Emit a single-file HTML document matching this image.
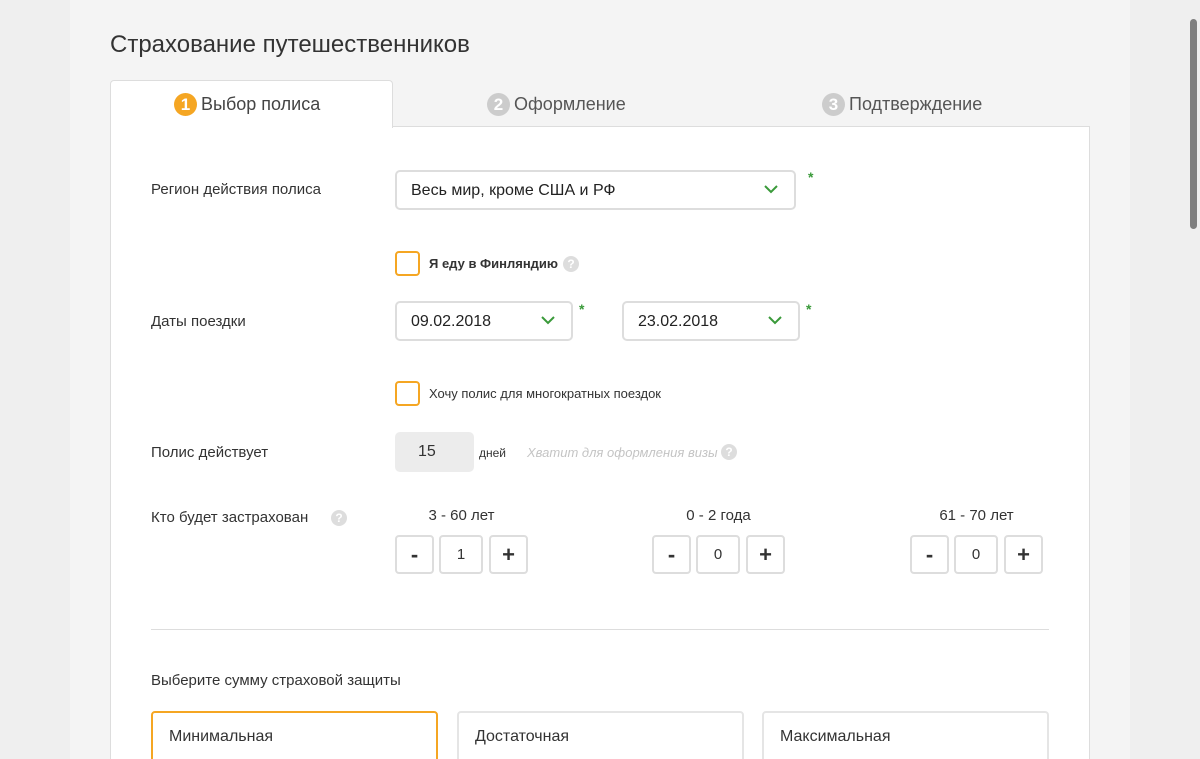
<!DOCTYPE html><html><head><meta charset="utf-8"><style>
*{box-sizing:border-box;margin:0;padding:0}
html,body{width:1200px;height:759px;overflow:hidden}
body{background:#efefef;font-family:"Liberation Sans",sans-serif;color:#333;position:relative}
.a{position:absolute}
.wrap{left:70px;top:0;width:1060px;height:759px;background:#f4f4f4}
.card{left:110px;top:126px;width:980px;height:640px;background:#fff;border:1px solid #ddd}
.tab{left:110px;top:80px;width:283px;height:48px;background:#fff;border:1px solid #ddd;border-bottom:none;border-radius:4px 4px 0 0}
.tl{font-size:18px;top:93px;color:#444;display:flex;align-items:center;gap:4px}
.num{width:23px;height:23px;border-radius:50%;color:#fff;font-size:17px;font-weight:bold;display:flex;align-items:center;justify-content:center}
.lbl{font-size:15px;left:151px}
.sel{border:2px solid #ddd;border-radius:5px;height:40px;font-size:16px;padding:10px 14px;color:#222}
.chev{position:absolute;right:16px;top:12px}
.ast{color:#3a9a3a;font-size:14px;font-weight:bold}
.cb{width:25px;height:25px;border:2px solid #f5a623;border-radius:4px;left:395px}
.q{width:16px;height:16px;border-radius:50%;background:#ddd;color:#fff;font-size:12px;font-weight:bold;display:flex;align-items:center;justify-content:center}
.btn{width:39px;height:39px;border:2px solid #ddd;border-radius:4px;font-size:22px;font-weight:bold;display:flex;align-items:center;justify-content:center;color:#333}
.val{width:44px;height:39px;border:2px solid #ddd;border-radius:4px;font-size:15px;display:flex;align-items:center;justify-content:center}
.grp{font-size:15px;text-align:center}
.opt{top:711px;height:60px;width:287px;border:2px solid #e5e5e5;border-radius:4px;font-size:16px;padding:15px 0 0 16px}
</style></head><body>
<div class="a wrap"></div>
<div class="a" style="left:1190px;top:19px;width:7px;height:210px;background:#7f7f7f;border-radius:4px"></div>
<div class="a" style="left:110px;top:31px;font-size:24px;color:#333">Страхование путешественников</div>
<div class="a card"></div>
<div class="a tab"></div>
<div class="a tl" style="left:174px"><span class="num" style="background:#f5a623">1</span>Выбор полиса</div>
<div class="a tl" style="left:487px;color:#555"><span class="num" style="background:#ccc">2</span>Оформление</div>
<div class="a tl" style="left:822px;color:#555"><span class="num" style="background:#ccc">3</span>Подтверждение</div>

<div class="a lbl" style="top:181px">Регион действия полиса</div>
<div class="a sel" style="left:395px;top:170px;width:401px">Весь мир, кроме США и РФ<svg class="chev" width="14" height="10" viewBox="0 0 14 10"><path d="M1 2l6 6 6-6" stroke="#3a9a3a" stroke-width="2" fill="none"/></svg></div>
<div class="a ast" style="left:808px;top:169px">*</div>

<div class="a cb" style="top:251px"></div>
<div class="a" style="left:429px;top:256px;font-size:13px;font-weight:bold">Я еду в Финляндию</div>
<div class="a q" style="left:563px;top:256px">?</div>

<div class="a lbl" style="top:313px">Даты поездки</div>
<div class="a sel" style="left:395px;top:301px;width:178px">09.02.2018<svg class="chev" width="14" height="10" viewBox="0 0 14 10"><path d="M1 2l6 6 6-6" stroke="#3a9a3a" stroke-width="2" fill="none"/></svg></div>
<div class="a ast" style="left:579px;top:301px">*</div>
<div class="a sel" style="left:622px;top:301px;width:178px">23.02.2018<svg class="chev" width="14" height="10" viewBox="0 0 14 10"><path d="M1 2l6 6 6-6" stroke="#3a9a3a" stroke-width="2" fill="none"/></svg></div>
<div class="a ast" style="left:806px;top:301px">*</div>

<div class="a cb" style="top:381px"></div>
<div class="a" style="left:429px;top:386px;font-size:13px">Хочу полис для многократных поездок</div>

<div class="a lbl" style="top:444px">Полис действует</div>
<div class="a" style="left:395px;top:432px;width:79px;height:40px;background:#ececec;border-radius:5px;font-size:16px;padding:11px 0 0 23px">15</div>
<div class="a" style="left:479px;top:446px;font-size:12px">дней</div>
<div class="a" style="left:527px;top:445px;font-size:13px;font-style:italic;color:#c4c4c4">Хватит для оформления визы</div>
<div class="a q" style="left:721px;top:444px">?</div>

<div class="a lbl" style="top:509px">Кто будет застрахован</div>
<div class="a q" style="left:331px;top:510px">?</div>

<div class="a grp" style="left:395px;top:507px;width:133px">3 - 60 лет</div>
<div class="a btn" style="left:395px;top:535px">-</div><div class="a val" style="left:439px;top:535px">1</div><div class="a btn" style="left:489px;top:535px">+</div>
<div class="a grp" style="left:652px;top:507px;width:133px">0 - 2 года</div>
<div class="a btn" style="left:652px;top:535px">-</div><div class="a val" style="left:696px;top:535px">0</div><div class="a btn" style="left:746px;top:535px">+</div>
<div class="a grp" style="left:910px;top:507px;width:133px">61 - 70 лет</div>
<div class="a btn" style="left:910px;top:535px">-</div><div class="a val" style="left:954px;top:535px">0</div><div class="a btn" style="left:1004px;top:535px">+</div>

<div class="a" style="left:151px;top:629px;width:898px;height:1px;background:#ddd"></div>
<div class="a lbl" style="top:672px">Выберите сумму страховой защиты</div>
<div class="a opt" style="left:151px;border-color:#f5a623">Минимальная</div>
<div class="a opt" style="left:457px">Достаточная</div>
<div class="a opt" style="left:762px">Максимальная</div>
</body></html>
